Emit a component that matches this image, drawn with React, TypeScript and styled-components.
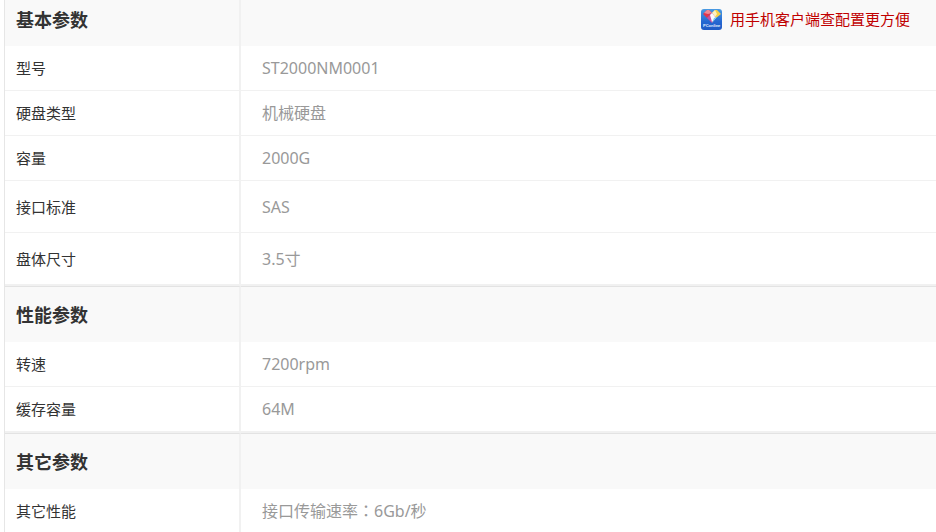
import React from "react";
import styled, { createGlobalStyle } from "styled-components";

const GlobalStyle = createGlobalStyle`
  * { box-sizing: border-box; }
  html { overflow: hidden; }
  body {
    margin: 0;
    background: #fff;
    color: #333;
    font-family: "Noto Sans", "Noto Sans CJK SC", sans-serif;
    font-size: 15px;
    line-height: 22px;
  }
`;

const Page = styled.main`
  padding-left: 4px;
`;

const SpecTable = styled.table`
  width: 100%;
  table-layout: fixed;
  border-collapse: separate;
  border-spacing: 0;
  border-left: 1px solid #e6e6e6;
`;

const LabelColumn = styled.col`
  width: 236px;
`;

const Group = styled.tbody`
  & + & > tr:first-child > * {
    border-top: 1px solid #e3e3e3;
  }
  & > tr:last-child > * {
    border-bottom: 2px solid #f1f1f1;
  }
`;

const HeadingRow = styled.tr<{ $first: boolean }>`
  height: ${(p) => (p.$first ? 46 : 56)}px;
  background: #f9f9f9;
`;

const GroupTitle = styled.th<{ $first: boolean }>`
  padding: 0 0 ${(p) => (p.$first ? 8 : 1)}px 11px;
  border-right: 2px solid #f1f1f1;
  text-align: left;
  font-family: "Noto Sans CJK SC", sans-serif;
  font-size: 18px;
  font-weight: 700;
`;

const HeadingCell = styled.td`
  padding: 0 26px 8px 0;
`;

const Row = styled.tr<{ $height: number }>`
  height: ${(p) => p.$height}px;
`;

const Label = styled.th`
  padding: 0 0 0 11px;
  border-right: 2px solid #f1f1f1;
  border-bottom: 1px solid #f1f1f1;
  text-align: left;
  font-weight: 400;
`;

const Value = styled.td`
  padding: 0 24px 0 21px;
  border-bottom: 1px solid #f1f1f1;
  color: #999;
  font-size: 16px;
`;

const Colon = styled.span`
  font-family: "Noto Sans CJK TC", sans-serif;
`;

const AppLink = styled.a`
  display: flex;
  align-items: center;
  justify-content: flex-end;
  gap: 8px;
  color: #c00000;
  text-decoration: none;
`;

const LogoSvg = styled.svg`
  display: block;
  width: 21px;
  height: 21px;
  flex: none;
`;

const LogoText = styled.text`
  font-family: "Liberation Sans", sans-serif;
  font-size: 4px;
  font-weight: 700;
  fill: #e4efff;
`;

function Logo() {
  return (
    <LogoSvg viewBox="0 0 21 21" aria-hidden="true">
      <defs>
        <linearGradient id="tile" x1="0" y1="0" x2="0" y2="1">
          <stop offset="0" stopColor="#4a9be2" />
          <stop offset="0.6" stopColor="#2468d2" />
          <stop offset="1" stopColor="#1f5ac4" />
        </linearGradient>
        <clipPath id="tileClip">
          <rect width="21" height="21" rx="3" />
        </clipPath>
      </defs>
      <g clipPath="url(#tileClip)">
        <rect width="21" height="21" fill="url(#tile)" />
        <path d="M2 5 6 1h2l3 3-4 4-1 1z" fill="#e0354f" />
        <path d="M3 4 6 1h2l3 3-4 1z" fill="#f08a94" />
        <path d="M11 4 14 1h2l4 4-5 4z" fill="#f6d04a" />
        <path d="M11 4 14 1l2 4-2 3z" fill="#fff3bd" />
        <path d="M6 9l5-5 4 5-4 5z" fill="#c8509c" />
        <path d="M9 6l2-2 4 5-4 4z" fill="#fbf9ff" />
        <path d="M11 14l2-5 3-1z" fill="#6ed1e8" />
        <LogoText x="2" y="18">PConline</LogoText>
      </g>
    </LogoSvg>
  );
}

interface Spec {
  label: string;
  value: React.ReactNode;
  height?: number;
}

interface SpecGroup {
  title: string;
  specs: Spec[];
}

const groups: SpecGroup[] = [
  {
    title: "基本参数",
    specs: [
      { label: "型号", value: "ST2000NM0001" },
      { label: "硬盘类型", value: "机械硬盘" },
      { label: "容量", value: "2000G" },
      { label: "接口标准", value: "SAS", height: 52 },
      { label: "盘体尺寸", value: "3.5寸", height: 53 },
    ],
  },
  {
    title: "性能参数",
    specs: [
      { label: "转速", value: "7200rpm" },
      { label: "缓存容量", value: "64M", height: 46 },
    ],
  },
  {
    title: "其它参数",
    specs: [
      {
        label: "其它性能",
        value: (
          <>
            接口传输速率<Colon>：</Colon>6Gb/秒
          </>
        ),
      },
    ],
  },
];

export default function App() {
  return (
    <Page>
      <GlobalStyle />
      <SpecTable>
        <colgroup>
          <LabelColumn />
          <col />
        </colgroup>
        {groups.map((group, index) => (
          <Group key={group.title}>
            <HeadingRow $first={index === 0}>
              <GroupTitle scope="rowgroup" $first={index === 0}>
                {group.title}
              </GroupTitle>
              <HeadingCell>
                {index === 0 && (
                  <AppLink href="#app">
                    <Logo />
                    用手机客户端查配置更方便
                  </AppLink>
                )}
              </HeadingCell>
            </HeadingRow>
            {group.specs.map((spec) => (
              <Row key={spec.label} $height={spec.height ?? 45}>
                <Label scope="row">{spec.label}</Label>
                <Value>{spec.value}</Value>
              </Row>
            ))}
          </Group>
        ))}
      </SpecTable>
    </Page>
  );
}
